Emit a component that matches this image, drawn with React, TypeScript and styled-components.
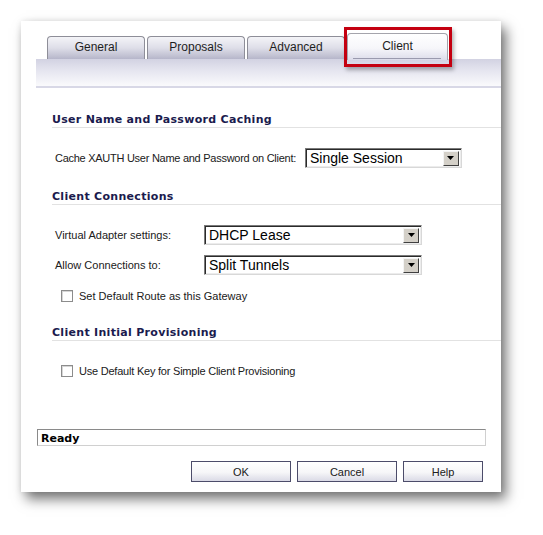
import React from 'react';
import styled, { createGlobalStyle } from 'styled-components';

const GlobalStyle = createGlobalStyle`
  html, body {
    margin: 0;
    padding: 0;
    background: #ffffff;
  }
  body {
    font-family: "Liberation Sans", Arial, sans-serif;
  }
`;

const Page = styled.div`
  width: 543px;
  height: 535px;
  padding: 21px 0 0 21px;
  box-sizing: border-box;
  overflow: hidden;
`;

const Dialog = styled.div`
  width: 480px;
  height: 471px;
  background: #ffffff;
  display: flex;
  flex-direction: column;
  box-shadow: 5px 7px 12px rgba(0, 0, 0, 0.55), 0 0 6px rgba(0, 0, 0, 0.08);
`;

const TabArea = styled.div`
  padding-left: 15px;
`;

const TabRow = styled.div`
  display: flex;
  align-items: flex-end;
  gap: 2px;
  height: 26px;
  margin-top: 12px;
  padding-left: 11px;
  position: relative;
  z-index: 1;
`;

const Tab = styled.div<{ $active?: boolean }>`
  position: relative;
  box-sizing: border-box;
  width: ${(p) => (p.$active ? '101px' : '98px')};
  height: ${(p) => (p.$active ? '27px' : '23px')};
  margin-bottom: ${(p) => (p.$active ? '-1px' : '0')};
  border: 1px solid ${(p) => (p.$active ? '#a4a4ac' : '#8e8e98')};
  border-bottom: none;
  border-radius: 4px 4px 0 0;
  background: ${(p) =>
    p.$active
      ? 'linear-gradient(#ffffff 0%, #f6f6fa 55%, #dcdcea 100%)'
      : 'linear-gradient(#f4f4f8 0%, #dedee8 50%, #b6b6ca 100%)'};
  display: flex;
  align-items: center;
  justify-content: center;
  font-size: 12px;
  color: #1e1e1e;
  padding-bottom: 2px;

  &::after {
    content: '';
    display: ${(p) => (p.$active ? 'block' : 'none')};
    position: absolute;
    left: 5px;
    right: 6px;
    bottom: 1px;
    height: 1px;
    background: #9a9aae;
  }
`;

const Highlight = styled.span`
  position: absolute;
  top: -7px;
  left: -4px;
  right: -5px;
  bottom: -7px;
  border: 3px solid #c40010;
  box-shadow: 2px 3px 4px rgba(0, 0, 0, 0.3);
  pointer-events: none;
`;

const Band = styled.div`
  height: 27px;
  background: linear-gradient(#d2d2e2 0%, #e6e6f0 45%, #fafafc 100%);
  border-bottom: 2px solid #d8d8e6;
`;

const Content = styled.div`
  flex: 1;
  display: flex;
  flex-direction: column;
  padding-left: 31px;
`;

const SectionTitle = styled.div<{ $gap: number }>`
  margin-top: ${(p) => p.$gap}px;
  font-family: "DejaVu Sans", Verdana, sans-serif;
  font-weight: bold;
  font-size: 11px;
  line-height: 14px;
  letter-spacing: 0.3px;
  color: #1b1b4e;
  border-bottom: 1px solid #e2e2e2;
`;

const Row = styled.div<{ $gap: number }>`
  margin-top: ${(p) => p.$gap}px;
  display: flex;
  align-items: center;
  padding-left: 3px;
  font-size: 11px;
  color: #202020;
`;

const Label = styled.span<{ $width?: number; $tight?: boolean }>`
  width: ${(p) => (p.$width ? `${p.$width}px` : 'auto')};
  margin-right: ${(p) => (p.$width ? '0' : '9px')};
  letter-spacing: ${(p) => (p.$tight ? '-0.27px' : '0')};
`;

const Select = styled.div<{ $width: number }>`
  box-sizing: border-box;
  width: ${(p) => p.$width}px;
  height: 20px;
  border-top: 1px solid #7a7a7a;
  border-left: 1px solid #7a7a7a;
  border-right: 1px solid #d8d8d8;
  border-bottom: 1px solid #d8d8d8;
  box-shadow: inset 1px 1px 0 #2a2a2a, inset -1px -1px 0 #ececec;
  background: #ffffff;
  display: flex;
  align-items: center;
  justify-content: space-between;
  padding: 0 2px 0 4px;
  font-size: 14px;
  color: #000000;
`;

const DropButton = styled.span`
  box-sizing: border-box;
  width: 16px;
  height: 15px;
  background: #d4d0c8;
  border-top: 1px solid #f4f4f4;
  border-left: 1px solid #f4f4f4;
  border-right: 1px solid #404040;
  border-bottom: 1px solid #404040;
  display: flex;
  align-items: center;
  justify-content: center;
`;

const CheckRow = styled.label<{ $gap: number; $tight?: boolean }>`
  margin-top: ${(p) => p.$gap}px;
  display: flex;
  align-items: center;
  gap: 6px;
  padding-left: 9px;
  font-size: 11px;
  letter-spacing: ${(p) => (p.$tight ? '-0.22px' : '0')};
  color: #202020;
`;

const Box = styled.span`
  box-sizing: border-box;
  width: 12px;
  height: 12px;
  border: 1px solid #8c8c8c;
  box-shadow: inset 1px 1px 0 #d6d6d6;
  background: #ffffff;
`;

const Status = styled.div`
  margin: auto 15px 0 16px;
  box-sizing: border-box;
  height: 17px;
  border-top: 1px solid #8a8a8a;
  border-left: 1px solid #8a8a8a;
  border-right: 1px solid #d0d0d0;
  border-bottom: 1px solid #d0d0d0;
  display: flex;
  align-items: center;
  padding: 2px 0 0 3px;
  font-family: "DejaVu Sans", Verdana, sans-serif;
  font-weight: bold;
  font-size: 11px;
  color: #000000;
`;

const ButtonBar = styled.div`
  display: flex;
  justify-content: flex-end;
  gap: 6px;
  padding: 15px 18px 10px 0;
`;

const Button = styled.button<{ $width: number }>`
  box-sizing: border-box;
  width: ${(p) => p.$width}px;
  height: 21px;
  border: 1px solid #4c4c6a;
  background: linear-gradient(#ffffff 0%, #f6f6f8 55%, #dadae6 100%);
  font-family: "Liberation Sans", Arial, sans-serif;
  font-size: 11px;
  color: #202020;
  padding: 0;
`;

const Arrow = () => (
  <svg width="7" height="4" viewBox="0 0 7 4">
    <path d="M0 0h7L3.5 4z" fill="#000" />
  </svg>
);

const Dropdown = ({ value, width }: { value: string; width: number }) => (
  <Select $width={width}>
    <span>{value}</span>
    <DropButton>
      <Arrow />
    </DropButton>
  </Select>
);

const App: React.FC = () => {
  return (
    <Page>
      <GlobalStyle />
      <Dialog>
        <TabArea>
          <TabRow>
            <Tab>General</Tab>
            <Tab>Proposals</Tab>
            <Tab>Advanced</Tab>
            <Tab $active>
              Client
              <Highlight />
            </Tab>
          </TabRow>
          <Band />
        </TabArea>
        <Content>
          <SectionTitle $gap={25}>User Name and Password Caching</SectionTitle>
          <Row $gap={20}>
            <Label $tight>Cache XAUTH User Name and Password on Client:</Label>
            <Dropdown value="Single Session" width={157} />
          </Row>

          <SectionTitle $gap={22}>Client Connections</SectionTitle>
          <Row $gap={20}>
            <Label $width={149}>Virtual Adapter settings:</Label>
            <Dropdown value="DHCP Lease" width={218} />
          </Row>
          <Row $gap={10}>
            <Label $width={149}>Allow Connections to:</Label>
            <Dropdown value="Split Tunnels" width={218} />
          </Row>
          <CheckRow $gap={15}>
            <Box />
            Set Default Route as this Gateway
          </CheckRow>

          <SectionTitle $gap={24}>Client Initial Provisioning</SectionTitle>
          <CheckRow $gap={24} $tight>
            <Box />
            Use Default Key for Simple Client Provisioning
          </CheckRow>
        </Content>
        <Status>Ready</Status>
        <ButtonBar>
          <Button $width={100}>OK</Button>
          <Button $width={100}>Cancel</Button>
          <Button $width={80}>Help</Button>
        </ButtonBar>
      </Dialog>
    </Page>
  );
};

export default App;
